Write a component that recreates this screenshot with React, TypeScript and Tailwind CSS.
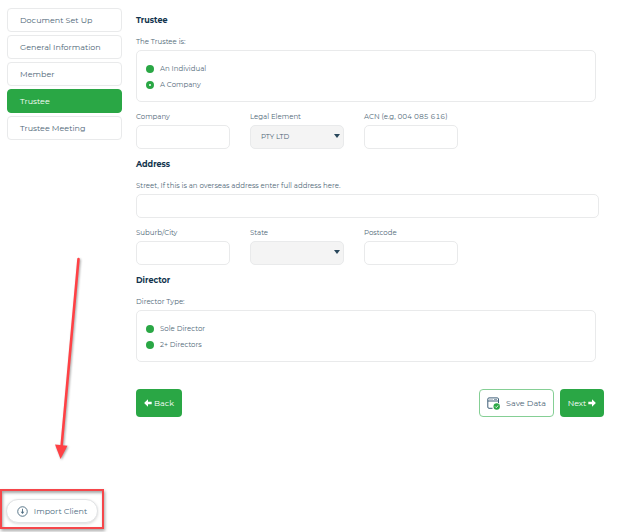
import { useState } from "react";
import type { ReactNode } from "react";

const steps = ["Document Set Up", "General Information", "Member", "Trustee", "Trustee Meeting"];

const labelText = "block text-[7px] leading-[10px] text-[#4f6877]";
const control = "block h-6 w-full rounded-[5px] border border-[#e9eaeb] px-[10px] text-[7px] text-[#4c6475] outline-none";

const SectionTitle = ({ children }: { children: ReactNode }) => (
  <h2 className="mb-[11px] text-[8px] leading-3 font-bold text-[#12344d]">{children}</h2>
);

const TextField = ({ id, label }: { id: string; label: string }) => (
  <div>
    <label htmlFor={id} className={`${labelText} mb-[3px] whitespace-nowrap tabular-nums`}>{label}</label>
    <input id={id} type="text" className={`${control} bg-white`} />
  </div>
);

const SelectField = ({ id, label, options }: { id: string; label: string; options: string[] }) => (
  <div>
    <label htmlFor={id} className={`${labelText} mb-[3px]`}>{label}</label>
    <div className="relative">
      <select id={id} className={`${control} appearance-none bg-[#f4f4f4]`}>
        {options.map((option) => (
          <option key={option}>{option}</option>
        ))}
      </select>
      <svg viewBox="0 0 6 4" className="pointer-events-none absolute top-[9px] right-1 h-1 w-[6px]" fill="#29475b">
        <path d="M0 0h6L3 4z" />
      </svg>
    </div>
  </div>
);

interface RadioGroupProps {
  name: string;
  legend: string;
  options: string[];
  initial?: string;
}

const RadioGroup = ({ name, legend, options, initial = "" }: RadioGroupProps) => {
  const [value, setValue] = useState(initial);

  return (
    <fieldset className="mr-2">
      <legend className={`${labelText} mb-[3px]`}>{legend}</legend>
      <div className="flex h-[52px] flex-col justify-center gap-1 rounded-[5px] border border-[#e9eaeb] px-[9px] pt-[2px]">
        {options.map((option) => (
          <label key={option} className="flex h-3 items-center gap-[6px] text-[7px] text-[#4f6877]">
            <input
              type="radio"
              name={name}
              checked={value === option}
              onChange={() => setValue(option)}
              className="size-2 appearance-none rounded-full bg-[#2aa745] checked:border-3 checked:border-[#2aa745] checked:bg-white"
            />
            {option}
          </label>
        ))}
      </div>
    </fieldset>
  );
};

const Arrow = ({ flip = false }: { flip?: boolean }) => (
  <svg viewBox="0 0 8 8" className={flip ? "size-2 rotate-180" : "size-2"} fill="currentColor">
    <path d="M4 .3 7.9 4 4 7.7V5.3H.3V2.7H4z" />
  </svg>
);

const SaveIcon = () => (
  <svg viewBox="0 0 13 13" className="size-[13px]" fill="none">
    <path d="M5.5 11.3H2a1.2 1.2 0 0 1-1.2-1.2V2A1.2 1.2 0 0 1 2 .9h8.3A1.2 1.2 0 0 1 11.5 2v4M.8 4h10.7" stroke="#3f5f78" />
    <path d="M2.5 2.5h1M4.5 2.5h1M7 2.5h3" stroke="#3f5f78" strokeWidth=".6" />
    <circle cx="9.7" cy="9.5" r="3.2" fill="#2aa745" />
    <path d="m8.1 9.5 1.1 1.1 2.1-2.1" stroke="#fff" strokeWidth=".9" />
  </svg>
);

const ImportIcon = () => (
  <svg viewBox="0 0 12 12" className="size-[11px]" fill="none" stroke="#4c6b80">
    <circle cx="6" cy="6" r="5.2" />
    <path d="M6 3v4" />
    <path d="M4 6.2h4L6 8.6z" fill="#4c6b80" stroke="none" />
  </svg>
);

const App = () => {
  const [active, setActive] = useState("Trustee");

  return (
    <div className="relative flex min-h-screen flex-col bg-white font-['Montserrat','Inter',sans-serif]">
      <div className="flex gap-[14px] pt-2 pr-[14px] pl-[7px]">
        {/* Steps */}
        <nav className="flex w-[115px] shrink-0 flex-col gap-[3px]">
          {steps.map((step) => (
            <button
              key={step}
              type="button"
              onClick={() => setActive(step)}
              className={
                step === active
                  ? "h-6 rounded-[4px] border border-[#2aa745] bg-[#2aa745] px-3 text-left text-[8px] text-white"
                  : "h-6 rounded-[4px] border border-[#e9eaeb] bg-white px-3 text-left text-[8px] text-[#4c6475]"
              }
            >
              {step}
            </button>
          ))}
        </nav>

        {/* Form */}
        <form className="min-w-0 flex-1 pt-[6px]" onSubmit={(e) => e.preventDefault()}>
          <section>
            <SectionTitle>Trustee</SectionTitle>
            <RadioGroup name="trustee" legend="The Trustee is:" options={["An Individual", "A Company"]} initial="A Company" />
            <div className="mt-[10px] mr-8 grid grid-cols-4 gap-5">
              <TextField id="company" label="Company" />
              <SelectField id="legal-element" label="Legal Element" options={["PTY LTD"]} />
              <TextField id="acn" label="ACN (e.g, 004 085 616)" />
            </div>
          </section>

          <section className="mt-[9px]">
            <SectionTitle>Address</SectionTitle>
            <div className="mr-[5px]">
              <TextField id="street" label="Street, If this is an overseas address enter full address here." />
            </div>
            <div className="mt-[10px] mr-8 grid grid-cols-4 gap-5">
              <TextField id="suburb" label="Suburb/City" />
              <SelectField id="state" label="State" options={[""]} />
              <TextField id="postcode" label="Postcode" />
            </div>
          </section>

          <section className="mt-[9px]">
            <SectionTitle>Director</SectionTitle>
            <RadioGroup name="director" legend="Director Type:" options={["Sole Director", "2+ Directors"]} />
          </section>

          <div className="mt-[27px] flex gap-[6px] text-[8px]">
            <button type="button" className="mr-auto flex h-7 w-[46px] items-center justify-center gap-[2px] rounded-[4px] bg-[#2aa745] text-white">
              <Arrow flip />
              Back
            </button>
            <button type="button" className="flex h-7 w-[75px] items-center justify-center gap-[6px] rounded-[4px] border border-[#85cf95] bg-white text-[#4c6475]">
              <SaveIcon />
              Save Data
            </button>
            <button type="button" className="flex h-7 w-11 items-center justify-center gap-[2px] rounded-[4px] bg-[#2aa745] text-white">
              Next
              <Arrow />
            </button>
          </div>
        </form>
      </div>

      {/* Import client callout */}
      <div className="mt-auto mb-[3px] w-[104px] border-2 border-[#f5464a] px-1 pt-2 pb-1 shadow-[1px_2px_3px_rgba(0,0,0,0.35),inset_1px_2px_3px_rgba(0,0,0,0.35)]">
        <button type="button" className="flex h-6 w-[92px] items-center justify-center gap-[6px] rounded-full border border-[#e1e3e5] bg-white text-[8px] text-[#4c6b80] shadow-[0_1px_3px_rgba(0,0,0,0.15)]">
          <ImportIcon />
          Import Client
        </button>
      </div>
      <svg viewBox="0 0 40 210" className="pointer-events-none absolute bottom-[67px] left-[50px] h-[210px] w-10 drop-shadow-[1px_1px_1px_rgba(0,0,0,0.35)]">
        <path d="M28.5 4 11.5 192" stroke="#ff4145" strokeWidth="2.6" strokeLinecap="round" />
        <path d="m5 189.5 12.5 1.2-7 13.3z" fill="#ff4145" />
      </svg>
    </div>
  );
};

export default App;
